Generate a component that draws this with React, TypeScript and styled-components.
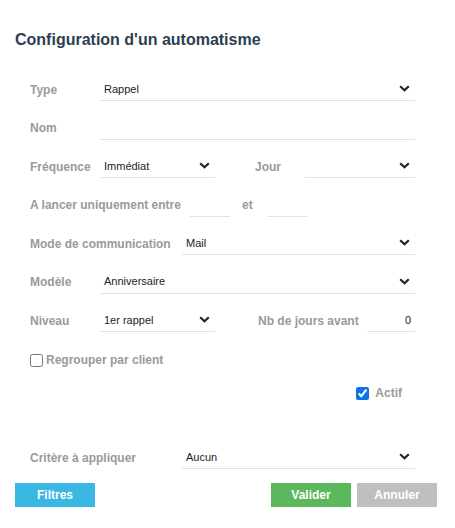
import React from "react";
import styled, { createGlobalStyle } from "styled-components";

const Global = createGlobalStyle`
  html, body { margin: 0; padding: 0; background: #ffffff; }
  body { font-family: "Liberation Sans", Arial, sans-serif; }
`;

const Dialog = styled.div`
  width: 455px;
  height: 528px;
  box-sizing: border-box;
  padding: 29px 15px 0 15px;
  background: #fff;
  display: flex;
  flex-direction: column;
`;

const Title = styled.h1`
  margin: 0;
  font-size: 16px;
  line-height: 22px;
  font-weight: bold;
  color: #2c3e50;
`;

const Form = styled.div`
  margin-top: 27px;
  padding-left: 15px;
  width: 385px;
  display: flex;
  flex-direction: column;
`;

const Row = styled.div<{ $mt?: number }>`
  display: flex;
  align-items: center;
  height: 23px;
  margin-top: ${(p) => (p.$mt ?? 15.5)}px;
`;

const Label = styled.span<{ $w: number }>`
  width: ${(p) => p.$w}px;
  flex: none;
  font-size: 12px;
  font-weight: bold;
  color: #9a9a9a;
  white-space: nowrap;
`;

const Field = styled.div<{ $w?: number; $right?: boolean }>`
  position: relative;
  box-sizing: border-box;
  height: 23px;
  ${(p) => (p.$w ? `width: ${p.$w}px; flex: none;` : "flex: 1;")}
  border-bottom: 1px solid #e2e2e2;
  display: flex;
  align-items: center;
  justify-content: ${(p) => (p.$right ? "flex-end" : "space-between")};
  padding: 0 4px 1px 4px;
  font-size: 11px;
  color: #222;
`;

const Chevron = () => (
  <svg width="11" height="7" viewBox="0 0 11 7" style={{ marginRight: 1 }}>
    <polyline points="1.2,1.2 5.5,5.2 9.8,1.2" fill="none" stroke="#222" strokeWidth="2.2" />
  </svg>
);

const Select: React.FC<{ value?: string; w?: number }> = ({ value, w }) => (
  <Field $w={w}>
    <span>{value ?? ""}</span>
    <Chevron />
  </Field>
);

const Spacer = styled.div<{ $w: number }>`
  width: ${(p) => p.$w}px;
  flex: none;
`;

const CheckRow = styled.label<{ $mt: number; $right?: boolean }>`
  display: flex;
  align-items: center;
  margin-top: ${(p) => p.$mt}px;
  height: 16px;
  justify-content: ${(p) => (p.$right ? "flex-end" : "flex-start")};
  padding-right: ${(p) => (p.$right ? "13px" : "0")};
  font-size: 12px;
  font-weight: bold;
  color: #9a9a9a;
`;

const Check = styled.input`
  margin: 0 3px 0 0;
  width: 13px;
  height: 13px;
  accent-color: #0b73e9;
`;

const CheckSpaced = styled(Check)`
  margin-right: 6px;
`;

const Buttons = styled.div`
  display: flex;
  align-items: center;
  margin-top: 14px;
  width: 422px;
`;

const Btn = styled.button<{ $bg: string }>`
  width: 80px;
  height: 24px;
  border: none;
  border-radius: 0;
  background: ${(p) => p.$bg};
  color: #fff;
  font-family: "Liberation Sans", Arial, sans-serif;
  font-size: 12px;
  font-weight: bold;
  padding: 0;
`;

const Grow = styled.div`
  flex: 1;
`;

export default function App() {
  return (
    <>
      <Global />
      <Dialog>
        <Title>Configuration d'un automatisme</Title>
        <Form>
          <Row $mt={0}>
            <Label $w={70}>Type</Label>
            <Select value="Rappel" />
          </Row>
          <Row>
            <Label $w={70}>Nom</Label>
            <Field />
          </Row>
          <Row>
            <Label $w={70}>Fréquence</Label>
            <Select value="Immédiat" w={115} />
            <Spacer $w={40} />
            <Label $w={50}>Jour</Label>
            <Select />
          </Row>
          <Row>
            <Label $w={160}>A lancer uniquement entre</Label>
            <Field $w={40} />
            <Spacer $w={12} />
            <Label $w={25}>et</Label>
            <Field $w={40} />
          </Row>
          <Row>
            <Label $w={152}>Mode de communication</Label>
            <Select value="Mail" />
          </Row>
          <Row>
            <Label $w={70}>Modèle</Label>
            <Select value="Anniversaire" />
          </Row>
          <Row>
            <Label $w={70}>Niveau</Label>
            <Select value="1er rappel" w={115} />
            <Spacer $w={43} />
            <Label $w={109}>Nb de jours avant</Label>
            <Field $right>0</Field>
          </Row>
          <CheckRow $mt={20}>
            <Check type="checkbox" />
            Regrouper par client
          </CheckRow>
          <CheckRow $mt={17} $right>
            <CheckSpaced type="checkbox" defaultChecked />
            Actif
          </CheckRow>
          <Row $mt={45}>
            <Label $w={152}>Critère à appliquer</Label>
            <Select value="Aucun" />
          </Row>
        </Form>
        <Buttons>
          <Btn $bg="#3bb7e4">Filtres</Btn>
          <Grow />
          <Btn $bg="#5cb85c">Valider</Btn>
          <Spacer $w={6} />
          <Btn $bg="#bfbfbf">Annuler</Btn>
        </Buttons>
      </Dialog>
    </>
  );
}
